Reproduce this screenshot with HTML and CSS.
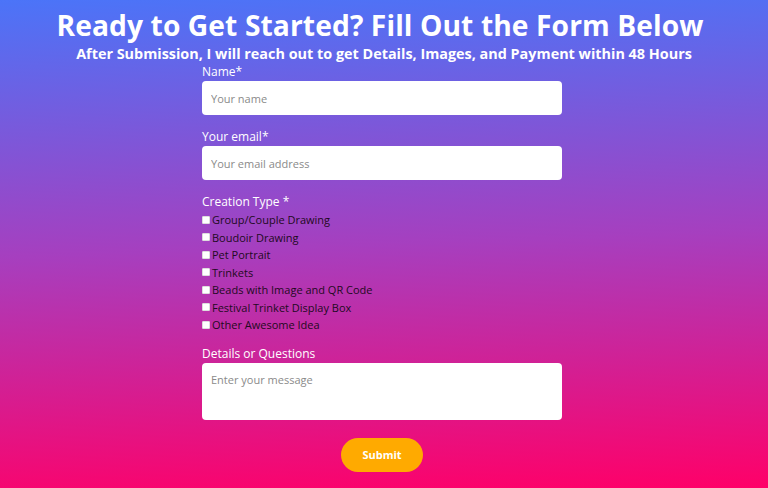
FILE: index.html
```html
<!DOCTYPE html>
<html lang="en">
<head>
<meta charset="utf-8">
<title>Form</title>
<link rel="stylesheet" href="styles.css">
</head>
<body>
<main class="page">
  <h1 class="title">Ready to Get Started? Fill Out the Form Below</h1>
  <p class="subtitle">After Submission, I will reach out to get Details, Images, and Payment within 48 Hours</p>
  <form class="form">
    <label class="label" for="name">Name*</label>
    <input class="field" id="name" type="text" placeholder="Your name">
    <label class="label gap" for="email">Your email*</label>
    <input class="field" id="email" type="email" placeholder="Your email address">
    <div class="label gap">Creation Type *</div>
    <div class="checks">
      <label class="check"><input type="checkbox" class="box"><span>Group/Couple Drawing</span></label>
      <label class="check"><input type="checkbox" class="box"><span>Boudoir Drawing</span></label>
      <label class="check"><input type="checkbox" class="box"><span>Pet Portrait</span></label>
      <label class="check"><input type="checkbox" class="box"><span>Trinkets</span></label>
      <label class="check"><input type="checkbox" class="box"><span>Beads with Image and QR Code</span></label>
      <label class="check"><input type="checkbox" class="box"><span>Festival Trinket Display Box</span></label>
      <label class="check"><input type="checkbox" class="box"><span>Other Awesome Idea</span></label>
    </div>
    <label class="label gap2" for="msg">Details or Questions</label>
    <textarea class="field area" id="msg" placeholder="Enter your message"></textarea>
    <div class="actions"><button type="button" class="submit">Submit</button></div>
  </form>
</main>
</body>
</html>
```
FILE: styles.css
```css
* { box-sizing: border-box; }
html, body { margin: 0; height: 100%; }
body {
  font-family: "Open Sans", "Liberation Sans", sans-serif;
  background: linear-gradient(178deg, #4b74f8 0%, #a63fbf 50%, #ff0068 100%);
  color: #fff;
  overflow: hidden;
}
.page {
  display: flex;
  flex-direction: column;
  align-items: center;
  padding-top: 6px;
}
.title {
  margin: 0 8px 0 0;
  font-size: 28.2px;
  font-weight: 700;
  line-height: 38px;
  letter-spacing: 0.1px;
}
.subtitle {
  margin: 0;
  font-size: 14.4px;
  font-weight: 700;
  line-height: 20px;
}
.form {
  width: 360px;
  margin-right: 4px;
  display: flex;
  flex-direction: column;
}
.label {
  font-size: 12px;
  font-weight: 500;
  line-height: 16px;
  margin-bottom: 1px;
  color: #fff;
}
.gap { margin-top: 14px; }
.gap2 { margin-top: 12px; }
.field {
  width: 100%;
  height: 34px;
  border: none;
  border-radius: 4px;
  background: #fff;
  padding: 0 9px;
  font-family: inherit;
  font-size: 11px;
  color: #333;
  outline: none;
}
.field::placeholder { color: #8a8a8a; }
.checks {
  display: flex;
  flex-direction: column;
}
.check {
  display: flex;
  align-items: center;
  height: 17.5px;
  font-size: 11px;
  font-weight: 500;
  color: #1e0a22;
}
.box {
  appearance: none;
  width: 8px;
  height: 8px;
  margin: 0 2px 0 0;
  background: #fff;
  border: 1px solid #ddd;
  border-radius: 1px;
}
.area {
  height: 57px;
  padding-top: 9px;
  resize: none;
  display: block;
}
.actions {
  display: flex;
  justify-content: center;
  margin-top: 18px;
}
.submit {
  width: 82px;
  height: 34px;
  border: none;
  border-radius: 17px;
  background: #ffaa00;
  color: #fff;
  font-family: inherit;
  font-weight: 700;
  font-size: 11px;
}
```
